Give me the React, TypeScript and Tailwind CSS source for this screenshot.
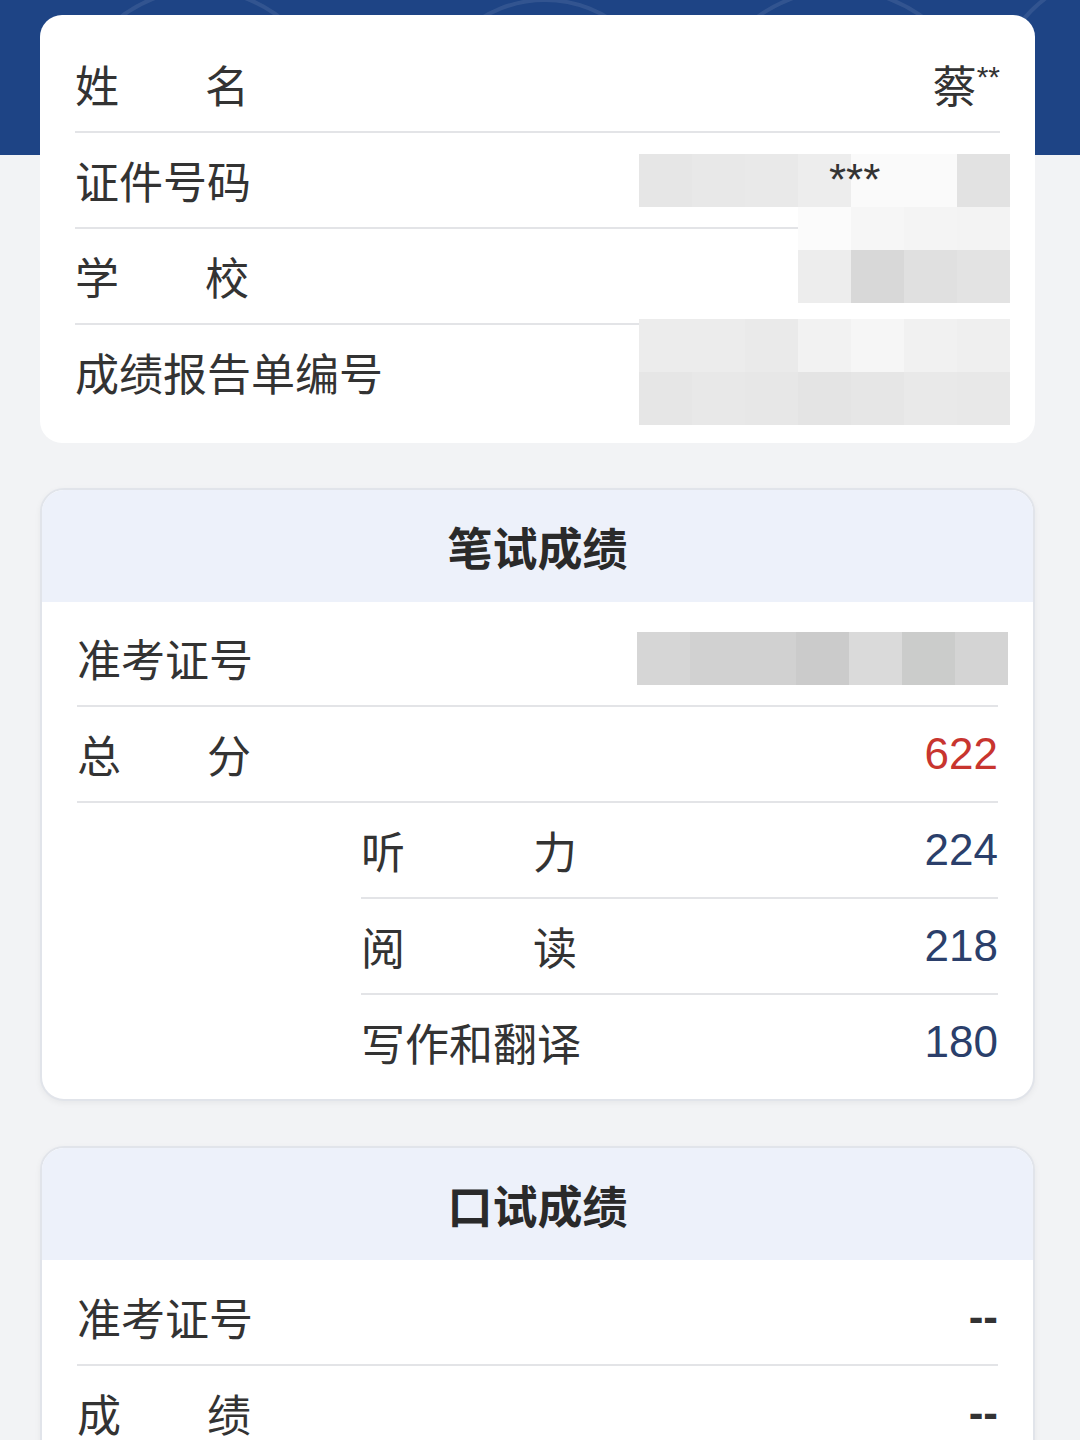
import React from "react";

const CJK = { fontFamily: '"Noto Sans CJK SC", "Noto Sans", sans-serif' };
const NUM = { fontFamily: '"Liberation Sans", Arial, sans-serif' };

function Spread({ text, w }: { text: string; w: string }) {
  return (
    <div className={`flex justify-between ${w}`}>
      {text.split("").map((c, i) => (
        <span key={i}>{c}</span>
      ))}
    </div>
  );
}

function Blocks({ shades }: { shades: string[] }) {
  return (
    <div className="flex">
      {shades.map((s, i) => (
        <div key={i} className="w-[53px] h-[53px]" style={{ backgroundColor: s }} />
      ))}
    </div>
  );
}

function Row({ label, children, divider = true, sub = false }: { label: React.ReactNode; children?: React.ReactNode; divider?: boolean; sub?: boolean }) {
  return (
    <div className={`flex items-center justify-between ${divider ? "h-[96px] border-b-2 border-[#e3e4e7]" : "h-[94px]"} ${sub ? "ml-[284px]" : ""}`}>
      <div className="text-[44px] leading-none text-[#333]">{label}</div>
      {children}
    </div>
  );
}

function CardHead({ title }: { title: string }) {
  return (
    <div className="h-[112px] bg-[#edf1fa] flex items-center justify-center text-[45px] font-bold text-[#2a2a2a] leading-none">
      {title}
    </div>
  );
}

export default function App() {
  return (
    <div className="w-[1080px] h-[1440px] overflow-hidden bg-[#f2f3f5] relative" style={CJK}>
      {/* blue banner */}
      <div className="absolute top-0 left-0 w-full h-[155px] bg-[#1e4485] overflow-hidden">
        <svg width="1080" height="155" className="absolute inset-0">
          <g fill="none" stroke="rgba(255,255,255,0.09)" strokeWidth="4">
            <circle cx="200" cy="120" r="130" />
            <circle cx="545" cy="120" r="120" />
            <circle cx="840" cy="130" r="140" />
            <circle cx="1130" cy="110" r="140" />
          </g>
        </svg>
      </div>

      <div className="relative flex flex-col gap-[45px] pt-[15px] pl-[40px] pr-[45px]">
        {/* card 1 */}
        <div className="bg-white rounded-[22px] px-[35px] pt-[22px] pb-[24px]">
          <Row label={<Spread text="姓名" w="w-[174px]" />}>
            <div className="text-[44px] leading-none text-[#333] flex items-start">
              蔡<span className="text-[30px] leading-none" style={NUM}>**</span>
            </div>
          </Row>
          <Row label="证件号码">
            <div className="-mr-[10px] flex relative">
              <Blocks shades={["#e6e6e6", "#e8e8e8", "#e9e9e9", "#ededed", "#fafafa", "#fafafa", "#e2e2e2"]} />
              <div className="absolute left-[190px] top-[4px] text-[44px] text-[#333] leading-none" style={NUM}>***</div>
            </div>
          </Row>
          <Row label={<Spread text="学校" w="w-[174px]" />}>
            <div className="-mr-[10px] flex flex-col mt-[-52px]">
              <Blocks shades={["#fbfbfb", "#f6f6f6", "#f4f4f4", "#f3f3f3"]} />
              <Blocks shades={["#ededed", "#d8d8d8", "#e0e0e0", "#e3e3e3"]} />
            </div>
          </Row>
          <Row label="成绩报告单编号" divider={false}>
            <div className="-mr-[10px] flex flex-col">
              <Blocks shades={["#ececec", "#ececec", "#eaeaea", "#f2f2f2", "#f6f6f6", "#f1f1f1", "#efefef"]} />
              <Blocks shades={["#e6e6e6", "#e8e8e8", "#e7e7e7", "#e4e4e4", "#e6e6e6", "#e9e9e9", "#e8e8e8"]} />
            </div>
          </Row>
        </div>

        {/* card 2 */}
        <div className="bg-white rounded-[24px] border-2 border-[#e1e4ea] overflow-hidden shadow-[0_2px_6px_rgba(0,0,0,0.05)]">
          <CardHead title="笔试成绩" />
          <div className="px-[35px] pt-[9px] pb-[10px]">
            <Row label="准考证号">
              <div className="-mr-[10px]">
                <Blocks shades={["#d6d6d6", "#d1d1d1", "#d1d1d1", "#cbcbcb", "#dadada", "#cbcccb", "#d4d4d4"]} />
              </div>
            </Row>
            <Row label={<Spread text="总分" w="w-[174px]" />}>
              <div className="text-[44px] leading-none text-[#c8352f]" style={NUM}>622</div>
            </Row>
            <Row sub label={<Spread text="听力" w="w-[216px]" />}>
              <div className="text-[44px] leading-none text-[#2b3f6b]" style={NUM}>224</div>
            </Row>
            <Row sub label={<Spread text="阅读" w="w-[216px]" />}>
              <div className="text-[44px] leading-none text-[#2b3f6b]" style={NUM}>218</div>
            </Row>
            <Row sub divider={false} label="写作和翻译">
              <div className="text-[44px] leading-none text-[#2b3f6b]" style={NUM}>180</div>
            </Row>
          </div>
        </div>

        {/* card 3 */}
        <div className="bg-white rounded-[24px] border-2 border-[#e1e4ea] overflow-hidden shadow-[0_2px_6px_rgba(0,0,0,0.05)]">
          <CardHead title="口试成绩" />
          <div className="px-[35px] pt-[10px] pb-[10px]">
            <Row label="准考证号">
              <div className="text-[44px] leading-none font-bold text-[#333]" style={NUM}>--</div>
            </Row>
            <Row label={<Spread text="成绩" w="w-[174px]" />}>
              <div className="text-[44px] leading-none font-bold text-[#333]" style={NUM}>--</div>
            </Row>
          </div>
        </div>
      </div>
    </div>
  );
}
